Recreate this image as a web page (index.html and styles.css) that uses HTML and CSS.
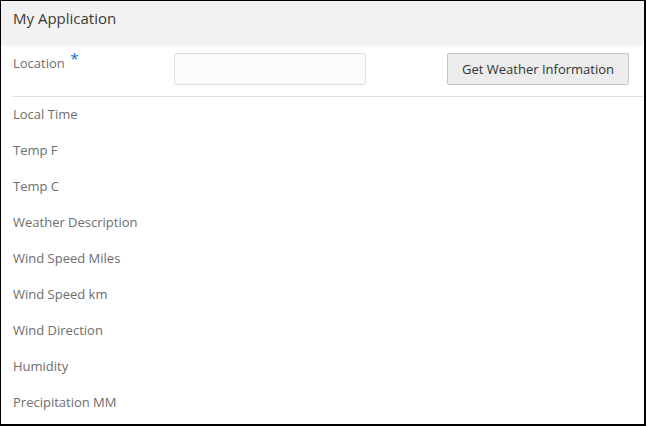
FILE: index.html
```html
<!DOCTYPE html>
<html>
<head>
<meta charset="utf-8">
<link rel="stylesheet" href="styles.css">
</head>
<body>
<div class="frame">
  <header class="app-header">My Application</header>
  <div class="form-row">
    <label class="field-label">Location <span class="req">*</span></label>
    <input class="text-input" type="text">
    <button class="btn">Get Weather Information</button>
  </div>
  <div class="results">
    <div class="result-row">Local Time</div>
    <div class="result-row">Temp F</div>
    <div class="result-row">Temp C</div>
    <div class="result-row">Weather Description</div>
    <div class="result-row">Wind Speed Miles</div>
    <div class="result-row">Wind Speed km</div>
    <div class="result-row">Wind Direction</div>
    <div class="result-row">Humidity</div>
    <div class="result-row">Precipitation MM</div>
  </div>
</div>
</body>
</html>
```
FILE: styles.css
```css
html, body {
  margin: 0;
  padding: 0;
  background: #fff;
}
body {
  font-family: "Open Sans", "Liberation Sans", sans-serif;
  font-size: 13px;
  color: #6e6e6e;
}
.frame {
  box-sizing: border-box;
  width: 646px;
  height: 426px;
  border-style: solid;
  border-color: #000;
  border-width: 1px 2px 2px 1px;
  overflow: hidden;
  display: flex;
  flex-direction: column;
}
.app-header {
  position: relative;
  z-index: 1;
  height: 42px;
  box-sizing: border-box;
  padding: 7px 12px 0;
  background: #f2f2f2;
  color: #3a3a3a;
  font-size: 15px;
  line-height: 20px;
  box-shadow: 0 2px 3px rgba(0, 0, 0, 0.08);
}
.form-row {
  display: flex;
  align-items: flex-start;
  padding: 10px 15px 11px 0;
  margin-left: 12px;
  border-bottom: 1px solid #dfdfdf;
}
.field-label {
  width: 161px;
  line-height: 18px;
  color: #6e6e6e;
}
.req {
  color: #0572ce;
  font-size: 15px;
  position: relative;
  top: -4px;
  margin-left: 2px;
}
.text-input {
  box-sizing: border-box;
  width: 192px;
  height: 32px;
  margin: 0;
  border: 1px solid #dfdfdf;
  border-radius: 2px;
  background: #fbfbfb;
  outline: none;
}
.btn {
  box-sizing: border-box;
  margin: 0 0 0 auto;
  width: 182px;
  height: 32px;
  padding: 0;
  border: 1px solid #c6c6c6;
  border-radius: 2px;
  background: #ececec;
  color: #333;
  font-family: "Open Sans", "Liberation Sans", sans-serif;
  font-size: 13px;
}
.results {
  padding: 0 12px;
}
.result-row {
  height: 36px;
  box-sizing: border-box;
  padding-bottom: 2px;
  line-height: 34px;
  color: #6e6e6e;
}
```
